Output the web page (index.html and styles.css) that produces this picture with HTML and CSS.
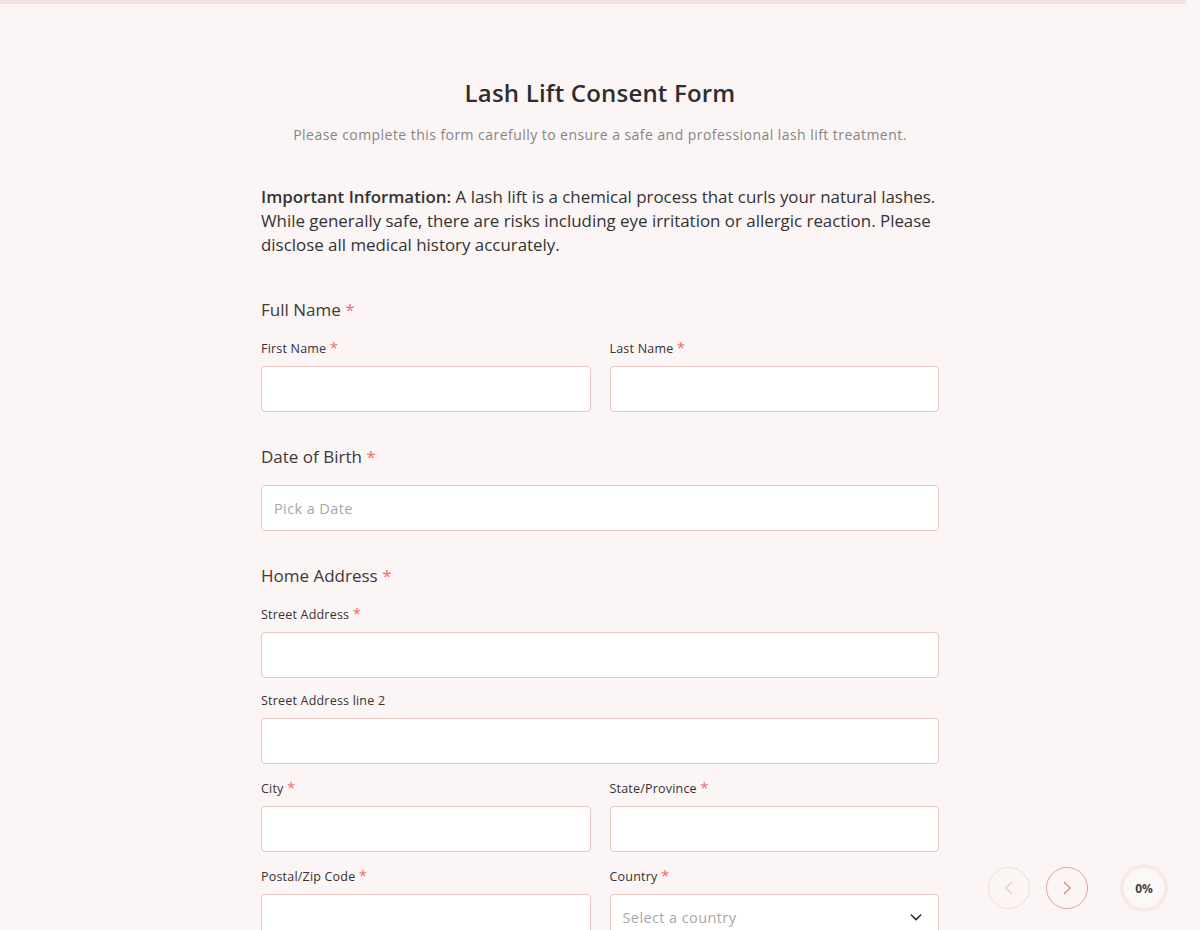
FILE: index.html
```html
<!DOCTYPE html>
<html lang="en">
<head>
    <meta charset="UTF-8">
    <meta name="viewport" content="width=device-width, initial-scale=1.0">
    <title>Lash Lift Consent Form</title>
    <link rel="stylesheet" href="styles.css">
</head>
<body>
    <div class="top-bar"></div>
    <div class="form-wrap">
        <h1 class="form-title">Lash Lift Consent Form</h1>
        <p class="form-subtitle">Please complete this form carefully to ensure a safe and professional lash lift treatment.</p>

        <p class="notice"><strong>Important Information:</strong> A lash lift is a chemical process that curls your natural lashes. While generally safe, there are risks including eye irritation or allergic reaction. Please disclose all medical history accurately.</p>

        <div class="group">
            <div class="group-label">Full Name <span class="req">*</span></div>
            <div class="row">
                <div class="field">
                    <label>First Name <span class="req">*</span></label>
                    <input type="text">
                </div>
                <div class="field">
                    <label>Last Name <span class="req">*</span></label>
                    <input type="text">
                </div>
            </div>
        </div>

        <div class="group">
            <div class="group-label">Date of Birth <span class="req">*</span></div>
            <input type="text" placeholder="Pick a Date">
        </div>

        <div class="group">
            <div class="group-label">Home Address <span class="req">*</span></div>
            <div class="field">
                <label>Street Address <span class="req">*</span></label>
                <input type="text">
            </div>
            <div class="field">
                <label>Street Address line 2</label>
                <input type="text">
            </div>
            <div class="row">
                <div class="field">
                    <label>City <span class="req">*</span></label>
                    <input type="text">
                </div>
                <div class="field">
                    <label>State/Province <span class="req">*</span></label>
                    <input type="text">
                </div>
            </div>
            <div class="row">
                <div class="field">
                    <label>Postal/Zip Code <span class="req">*</span></label>
                    <input type="text">
                </div>
                <div class="field">
                    <label>Country <span class="req">*</span></label>
                    <div class="select">
                        <span>Select a country</span>
                        <svg width="16" height="16" viewBox="0 0 24 24" fill="none" stroke="#333" stroke-width="2.6" stroke-linecap="round" stroke-linejoin="round"><path d="M5 9l7 7 7-7"/></svg>
                    </div>
                </div>
            </div>
        </div>
    </div>

    <div class="pager">
        <button class="nav-btn disabled">
            <svg width="20" height="20" viewBox="0 0 24 24" fill="none" stroke="currentColor" stroke-width="1.8" stroke-linecap="round" stroke-linejoin="round"><path d="M15 5.5l-7 6.5 7 6.5"/></svg>
        </button>
        <button class="nav-btn">
            <svg width="20" height="20" viewBox="0 0 24 24" fill="none" stroke="currentColor" stroke-width="1.8" stroke-linecap="round" stroke-linejoin="round"><path d="M9 5.5l7 6.5-7 6.5"/></svg>
        </button>
        <div class="progress">0%</div>
    </div>
</body>
</html>
```

FILE: styles.css
```css
body {
    margin: 0;
    padding: 0;
    background-color: #fcf5f5;
    font-family: "Open Sans", Arial, sans-serif;
    color: #333;
    overflow: hidden;
}
.top-bar {
    height: 4px;
    width: 1186px;
    background-color: #f3e2e2;
}
.form-wrap {
    width: 678px;
    margin: 0 auto;
    padding-top: 72px;
}
.form-title {
    margin: 0;
    text-align: center;
    font-size: 24px;
    font-weight: 600;
    letter-spacing: 0.2px;
    color: #2e2e2e;
    line-height: 34px;
}
.form-subtitle {
    margin: 15px 0 0;
    text-align: center;
    font-size: 14px;
    letter-spacing: 0.45px;
    color: #858585;
    line-height: 20px;
}
.notice {
    margin: 40px 0 0;
    font-size: 16.9px;
    line-height: 24px;
    color: #333;
}
.notice strong {
    font-weight: 600;
}
.group {
    margin-top: 33px;
}
.notice + .group {
    margin-top: 41px;
}
.group > :last-child {
    margin-bottom: 0;
}
.group-label {
    font-size: 17px;
    line-height: 24px;
    color: #3a3a3a;
    margin-bottom: 16px;
}
.req {
    color: #f06b6b;
}
.row {
    display: grid;
    grid-template-columns: 1fr 1fr;
    gap: 19px;
    margin-bottom: 14px;
}
.field {
    margin-bottom: 14px;
}
.row .field {
    margin-bottom: 0;
}
.field label {
    display: block;
    font-size: 12.5px;
    letter-spacing: 0.2px;
    line-height: 18px;
    color: #333;
    margin-bottom: 8px;
}
.field label .req {
    font-size: 15px;
}
.group-label .req {
    font-size: 17px;
}
input {
    display: block;
    box-sizing: border-box;
    width: 100%;
    height: 46px;
    border: 1px solid #e6c8c3;
    border-radius: 4px;
    background-color: #fff;
    padding: 0 12px;
    font-family: inherit;
    font-size: 14.5px;
    letter-spacing: 0.4px;
    color: #333;
    outline: none;
}
input::placeholder {
    color: #a8a8a8;
}
.select {
    box-sizing: border-box;
    height: 46px;
    border: 1px solid #e6c8c3;
    border-radius: 4px;
    background-color: #fff;
    padding: 0 14px 0 12px;
    display: flex;
    align-items: center;
    justify-content: space-between;
    font-size: 14.5px;
    letter-spacing: 0.4px;
    color: #a8a8a8;
}
.pager {
    position: fixed;
    right: 32px;
    bottom: 18px;
    display: flex;
    align-items: center;
}
.nav-btn {
    width: 42px;
    height: 42px;
    border-radius: 50%;
    border: 1.5px solid #dba89f;
    background: transparent;
    color: #d49a90;
    display: flex;
    align-items: center;
    justify-content: center;
    padding: 0;
    margin-right: 16px;
}
.nav-btn.disabled {
    border-color: #f3dcd8;
    color: #f0d2cc;
}
.progress {
    box-sizing: border-box;
    width: 48px;
    height: 48px;
    border-radius: 50%;
    border: 4px solid #f7ebe8;
    background-color: #fdf8f8;
    display: flex;
    align-items: center;
    justify-content: center;
    font-size: 12px;
    font-weight: 700;
    color: #444;
    margin-left: 16px;
}
```
